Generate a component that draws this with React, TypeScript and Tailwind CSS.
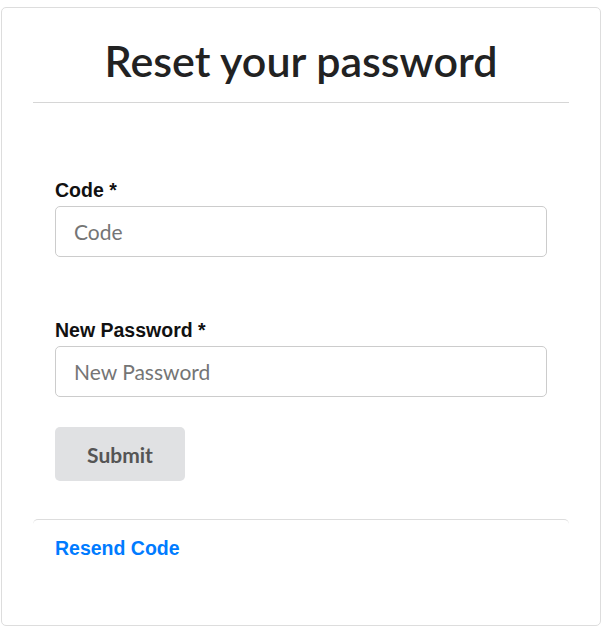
export default function App() {
  return (
    <div className="min-h-screen bg-white pt-[7px] pl-[1px]">
      <div className="flex h-[619px] w-[600px] flex-col rounded-[5px] border border-[#dddddd] bg-white">
        {/* Header */}
        <div className="mx-[31px] border-b border-[#d6d6d6] pt-[25px] pb-[13px] text-center">
          <h1 className="font-['Lato',sans-serif] text-[43px] font-semibold leading-[56px] text-[#222222]">
            Reset your password
          </h1>
        </div>

        {/* Form */}
        <div className="flex-1 px-[53px] pt-[75px]">
          <div className="mb-[61px]">
            <label className="mb-[4px] block font-['Liberation_Sans',Arial,sans-serif] text-[19.5px] font-bold leading-[24px] text-[#111111]">
              Code *
            </label>
            <input
              type="text"
              placeholder="Code"
              className="block h-[51px] w-[492px] rounded-[5px] border border-[#cccccc] bg-white px-[18px] font-['Lato',sans-serif] text-[21px] text-[#333333] placeholder:text-[#757575] outline-none"
            />
          </div>
          <div className="mb-[30px]">
            <label className="mb-[4px] block font-['Liberation_Sans',Arial,sans-serif] text-[19.5px] font-bold leading-[24px] text-[#111111]">
              New Password *
            </label>
            <input
              type="password"
              placeholder="New Password"
              className="block h-[51px] w-[492px] rounded-[5px] border border-[#cccccc] bg-white px-[18px] font-['Lato',sans-serif] text-[21px] text-[#333333] placeholder:text-[#757575] outline-none"
            />
          </div>
          <button className="h-[54px] w-[130px] rounded-[5px] bg-[#e0e1e3] pt-[1px] font-['Lato',sans-serif] text-[21px] font-bold text-[#555555]">
            Submit
          </button>
        </div>

        {/* Footer */}
        <div className="mx-[31px] mb-[64px] rounded-[5px] border-t border-[#dddddd] px-[22px] pt-[16px]">
          <a href="#" className="font-['Liberation_Sans',Arial,sans-serif] text-[19.5px] font-bold leading-[24px] text-[#007bff]">
            Resend Code
          </a>
        </div>
      </div>
    </div>
  )
}
